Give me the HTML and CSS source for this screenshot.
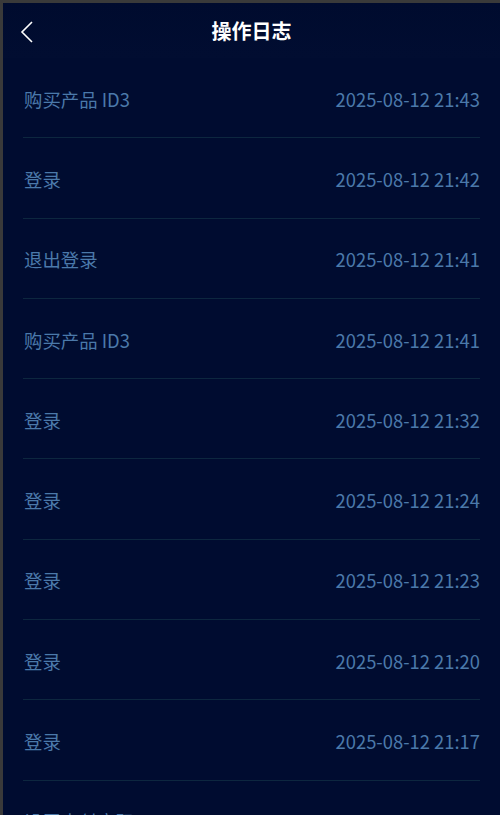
FILE: index.html
```html
<!DOCTYPE html>
<html lang="zh-CN">
<head>
<meta charset="utf-8">
<title>操作日志</title>
<link rel="stylesheet" href="styles.css">
</head>
<body>
<div class="frame">
  <header class="topbar">
    <button class="back" aria-label="返回">
      <svg width="14" height="22" viewBox="0 0 14 22"><path d="M12 1 L2 11 L12 21" fill="none" stroke="#ffffff" stroke-width="1.6"/></svg>
    </button>
    <h1 class="title">操作日志</h1>
  </header>
  <ul class="log-list">
    <li class="log-row"><span class="action">购买产品 ID3</span><span class="time">2025-08-12 21:43</span></li>
    <li class="log-row"><span class="action">登录</span><span class="time">2025-08-12 21:42</span></li>
    <li class="log-row"><span class="action">退出登录</span><span class="time">2025-08-12 21:41</span></li>
    <li class="log-row"><span class="action">购买产品 ID3</span><span class="time">2025-08-12 21:41</span></li>
    <li class="log-row"><span class="action">登录</span><span class="time">2025-08-12 21:32</span></li>
    <li class="log-row"><span class="action">登录</span><span class="time">2025-08-12 21:24</span></li>
    <li class="log-row"><span class="action">登录</span><span class="time">2025-08-12 21:23</span></li>
    <li class="log-row"><span class="action">登录</span><span class="time">2025-08-12 21:20</span></li>
    <li class="log-row"><span class="action">登录</span><span class="time">2025-08-12 21:17</span></li>
    <li class="log-row"><span class="action">设置支付密码</span><span class="time">2025-08-12 21:10</span></li>
  </ul>
</div>
</body>
</html>
```
FILE: styles.css
```css
html, body {
  margin: 0;
  padding: 0;
  height: 100%;
  overflow: hidden;
  background: #3a3a3a;
}
.frame {
  box-sizing: border-box;
  height: 100%;
  margin-top: 3px;
  margin-left: 3px;
  background: #000c30;
  font-family: "Noto Sans CJK SC", "Noto Sans", sans-serif;
}
.topbar {
  position: relative;
  height: 55px;
  display: flex;
  align-items: center;
  justify-content: center;
  background: linear-gradient(#000b2e, #010d31);
}
.back {
  position: absolute;
  left: 17px;
  top: 18px;
  background: none;
  border: 0;
  padding: 0;
  cursor: pointer;
  line-height: 0;
}
.title {
  margin: 0;
  color: #ffffff;
  font-size: 20px;
  font-weight: 700;
  line-height: 1;
}
.log-list {
  list-style: none;
  margin: 0;
  padding: 0 20px 0 20px;
}
.log-row {
  box-sizing: border-box;
  display: flex;
  justify-content: space-between;
  align-items: center;
  height: 80.3px;
  padding-top: 2px;
  border-bottom: 1px solid #0d273f;
  color: #4b79aa;
  font-size: 18.4px;
}
.action {
  padding-left: 1px;
}
```
